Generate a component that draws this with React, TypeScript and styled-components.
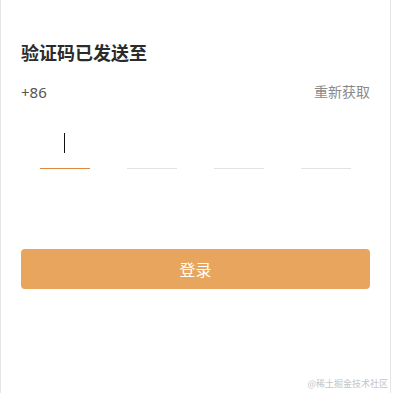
import React from 'react';
import styled, { createGlobalStyle } from 'styled-components';

const GlobalStyle = createGlobalStyle`
  body {
    margin: 0;
    padding: 0;
    background: #fff;
    font-family: "Noto Sans", "Noto Sans CJK SC", sans-serif;
  }
`;

const Page = styled.div`
  position: relative;
  width: 391px;
  height: 393px;
  box-sizing: border-box;
  border-left: 1px solid #e6e6e6;
  border-right: 1px solid #e6e6e6;
  padding: 40px 20px 0 20px;
`;

const Title = styled.h2`
  margin: 0;
  font-size: 18px;
  line-height: 26px;
  font-weight: 700;
  color: #2b2b2b;
`;

const PhoneRow = styled.div`
  display: flex;
  justify-content: space-between;
  align-items: center;
  margin-top: 16px;
  font-size: 14px;
  line-height: 20px;
`;

const Phone = styled.span`
  color: #555;
  font-size: 15px;
`;

const Resend = styled.span`
  color: #8a8a8a;
`;

const CodeRow = styled.div`
  display: flex;
  justify-content: space-around;
  margin-top: 21px;
`;

const CodeCell = styled.div<{ $active?: boolean }>`
  width: 50px;
  height: 46px;
  box-sizing: border-box;
  border-bottom: 1px solid ${p => (p.$active ? '#dd8a40' : '#e2e2e2')};
  display: flex;
  justify-content: center;
  align-items: center;
`;

const Cursor = styled.span`
  width: 1.5px;
  height: 20px;
  background: #111;
  margin-top: -6px;
`;

const LoginButton = styled.button`
  display: block;
  width: 100%;
  height: 40px;
  margin-top: 80px;
  border: none;
  border-radius: 4px;
  background: #e8a55e;
  color: #fff;
  font-family: inherit;
  font-size: 16px;
  cursor: pointer;
`;

const Watermark = styled.div`
  position: absolute;
  right: 2px;
  bottom: 3px;
  font-size: 9px;
  color: #c4c4c4;
  font-family: "Noto Sans CJK SC", serif;
`;

export default function App() {
  return (
    <>
      <GlobalStyle />
      <Page>
        <Title>验证码已发送至</Title>
        <PhoneRow>
          <Phone>+86</Phone>
          <Resend>重新获取</Resend>
        </PhoneRow>
        <CodeRow>
          {[0, 1, 2, 3].map(i => (
            <CodeCell key={i} $active={i === 0}>
              {i === 0 && <Cursor />}
            </CodeCell>
          ))}
        </CodeRow>
        <LoginButton>登录</LoginButton>
        <Watermark>@稀土掘金技术社区</Watermark>
      </Page>
    </>
  );
}
